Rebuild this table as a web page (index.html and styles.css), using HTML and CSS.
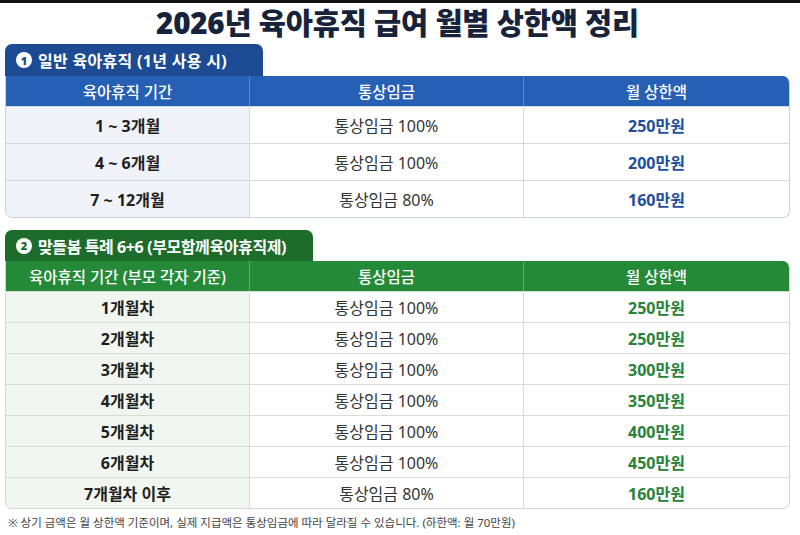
FILE: index.html
```html
<!DOCTYPE html>
<html lang="ko">
<head>
<meta charset="utf-8">
<title>2026년 육아휴직 급여 월별 상한액 정리</title>
<link rel="stylesheet" href="styles.css">
</head>
<body>
<div class="page">
  <div class="topbar"></div>
  <h1 class="title">2026년 육아휴직 급여 월별 상한액 정리</h1>

  <section class="sec blue">
    <div class="tab tab1"><span class="num">1</span>일반 육아휴직 (1년 사용 시)</div>
    <div class="table">
      <div class="row head"><div class="cell">육아휴직 기간</div><div class="cell">통상임금</div><div class="cell">월 상한액</div></div>
      <div class="row"><div class="cell c1">1 ~ 3개월</div><div class="cell c2">통상임금 100%</div><div class="cell c3">250만원</div></div>
      <div class="row"><div class="cell c1">4 ~ 6개월</div><div class="cell c2">통상임금 100%</div><div class="cell c3">200만원</div></div>
      <div class="row"><div class="cell c1">7 ~ 12개월</div><div class="cell c2">통상임금 80%</div><div class="cell c3">160만원</div></div>
    </div>
  </section>

  <section class="sec green">
    <div class="tab tab2"><span class="num">2</span>맞돌봄 특례 6+6 (부모함께육아휴직제)</div>
    <div class="table">
      <div class="row head"><div class="cell">육아휴직 기간 (부모 각자 기준)</div><div class="cell">통상임금</div><div class="cell">월 상한액</div></div>
      <div class="row"><div class="cell c1">1개월차</div><div class="cell c2">통상임금 100%</div><div class="cell c3">250만원</div></div>
      <div class="row"><div class="cell c1">2개월차</div><div class="cell c2">통상임금 100%</div><div class="cell c3">250만원</div></div>
      <div class="row"><div class="cell c1">3개월차</div><div class="cell c2">통상임금 100%</div><div class="cell c3">300만원</div></div>
      <div class="row"><div class="cell c1">4개월차</div><div class="cell c2">통상임금 100%</div><div class="cell c3">350만원</div></div>
      <div class="row"><div class="cell c1">5개월차</div><div class="cell c2">통상임금 100%</div><div class="cell c3">400만원</div></div>
      <div class="row"><div class="cell c1">6개월차</div><div class="cell c2">통상임금 100%</div><div class="cell c3">450만원</div></div>
      <div class="row"><div class="cell c1">7개월차 이후</div><div class="cell c2">통상임금 80%</div><div class="cell c3">160만원</div></div>
    </div>
  </section>

  <p class="note">※ 상기 금액은 월 상한액 기준이며, 실제 지급액은 통상임금에 따라 달라질 수 있습니다. (하한액: 월 70만원)</p>
</div>
</body>
</html>
```

FILE: styles.css
```css
* { box-sizing: border-box; }

html, body {
  margin: 0;
  padding: 0;
  background: #ffffff;
}

body {
  font-family: "Noto Sans", "Noto Sans CJK KR", sans-serif;
  color: #222;
  width: 800px;
  height: 535px;
  overflow: hidden;
}

.page {
  padding: 0 10px 0 5px;
}

.topbar {
  height: 3px;
  background: #111;
  margin: 0 -10px 0 -5px;
}

.title {
  margin: 0 0 3px;
  height: 38px;
  line-height: 40px;
  text-align: center;
  font-size: 29.5px;
  font-weight: 900;
  color: #17223b;
  letter-spacing: -0.2px;
}

.sec + .sec {
  margin-top: 12px;
}

.tab {
  display: flex;
  align-items: center;
  gap: 6px;
  height: 32px;
  padding-left: 11px;
  color: #fff;
  font-size: 16px;
  font-weight: 700;
  border-radius: 7px 7px 0 0;
}

.tab1 { width: 258px; letter-spacing: 0.3px; }
.tab2 { width: 308px; height: 31px; letter-spacing: -0.4px; }

.num {
  display: inline-flex;
  align-items: center;
  justify-content: center;
  width: 16px;
  height: 16px;
  border-radius: 50%;
  background: #fff;
  font-size: 11px;
  font-weight: 900;
  line-height: 1;
  letter-spacing: 0;
}

.blue .tab { background: #1c4b93; }
.blue .num { color: #1c4b93; }
.green .tab { background: #1d6c2b; }
.green .num { color: #1d6c2b; }

.table {
  border: 1px solid #cad3df;
  border-top: none;
  border-radius: 0 7px 7px 7px;
  overflow: hidden;
}

.green .table { border-color: #cfdccd; }

.row {
  display: grid;
  grid-template-columns: 243px 274px 1fr;
  height: 37px;
  border-top: 1px solid #d3d9e3;
}

.green .row {
  height: 31px;
  border-top-color: #d6dfd4;
}

.row.head {
  height: 30px;
  border-top: none;
}

.cell {
  display: flex;
  align-items: center;
  justify-content: center;
  font-size: 16px;
}

.cell + .cell {
  border-left: 1px solid #d3d9e3;
}

.green .cell + .cell { border-left-color: #d6dfd4; }

.head .cell {
  color: #fff;
  font-weight: 500;
  font-size: 15.5px;
}

.blue .head { background: #2660b4; }
.blue .head .cell + .cell { border-left-color: #5a86c9; }
.green .head { background: #258a37; }
.green .head .cell + .cell { border-left-color: #5fae6b; }

.c1 {
  font-weight: 700;
  color: #1e1e1e;
}

.blue .c1 { background: #f0f4fa; }
.green .c1 { background: #f2f6f1; }

.c2 {
  color: #333;
  font-weight: 400;
}

.c3 {
  font-weight: 700;
}

.blue .c3 { color: #1f4f9b; }
.green .c3 { color: #27833a; }

.note {
  margin: 7px 0 0 3px;
  font-size: 11.5px;
  line-height: 14px;
  color: #444;
}
```
